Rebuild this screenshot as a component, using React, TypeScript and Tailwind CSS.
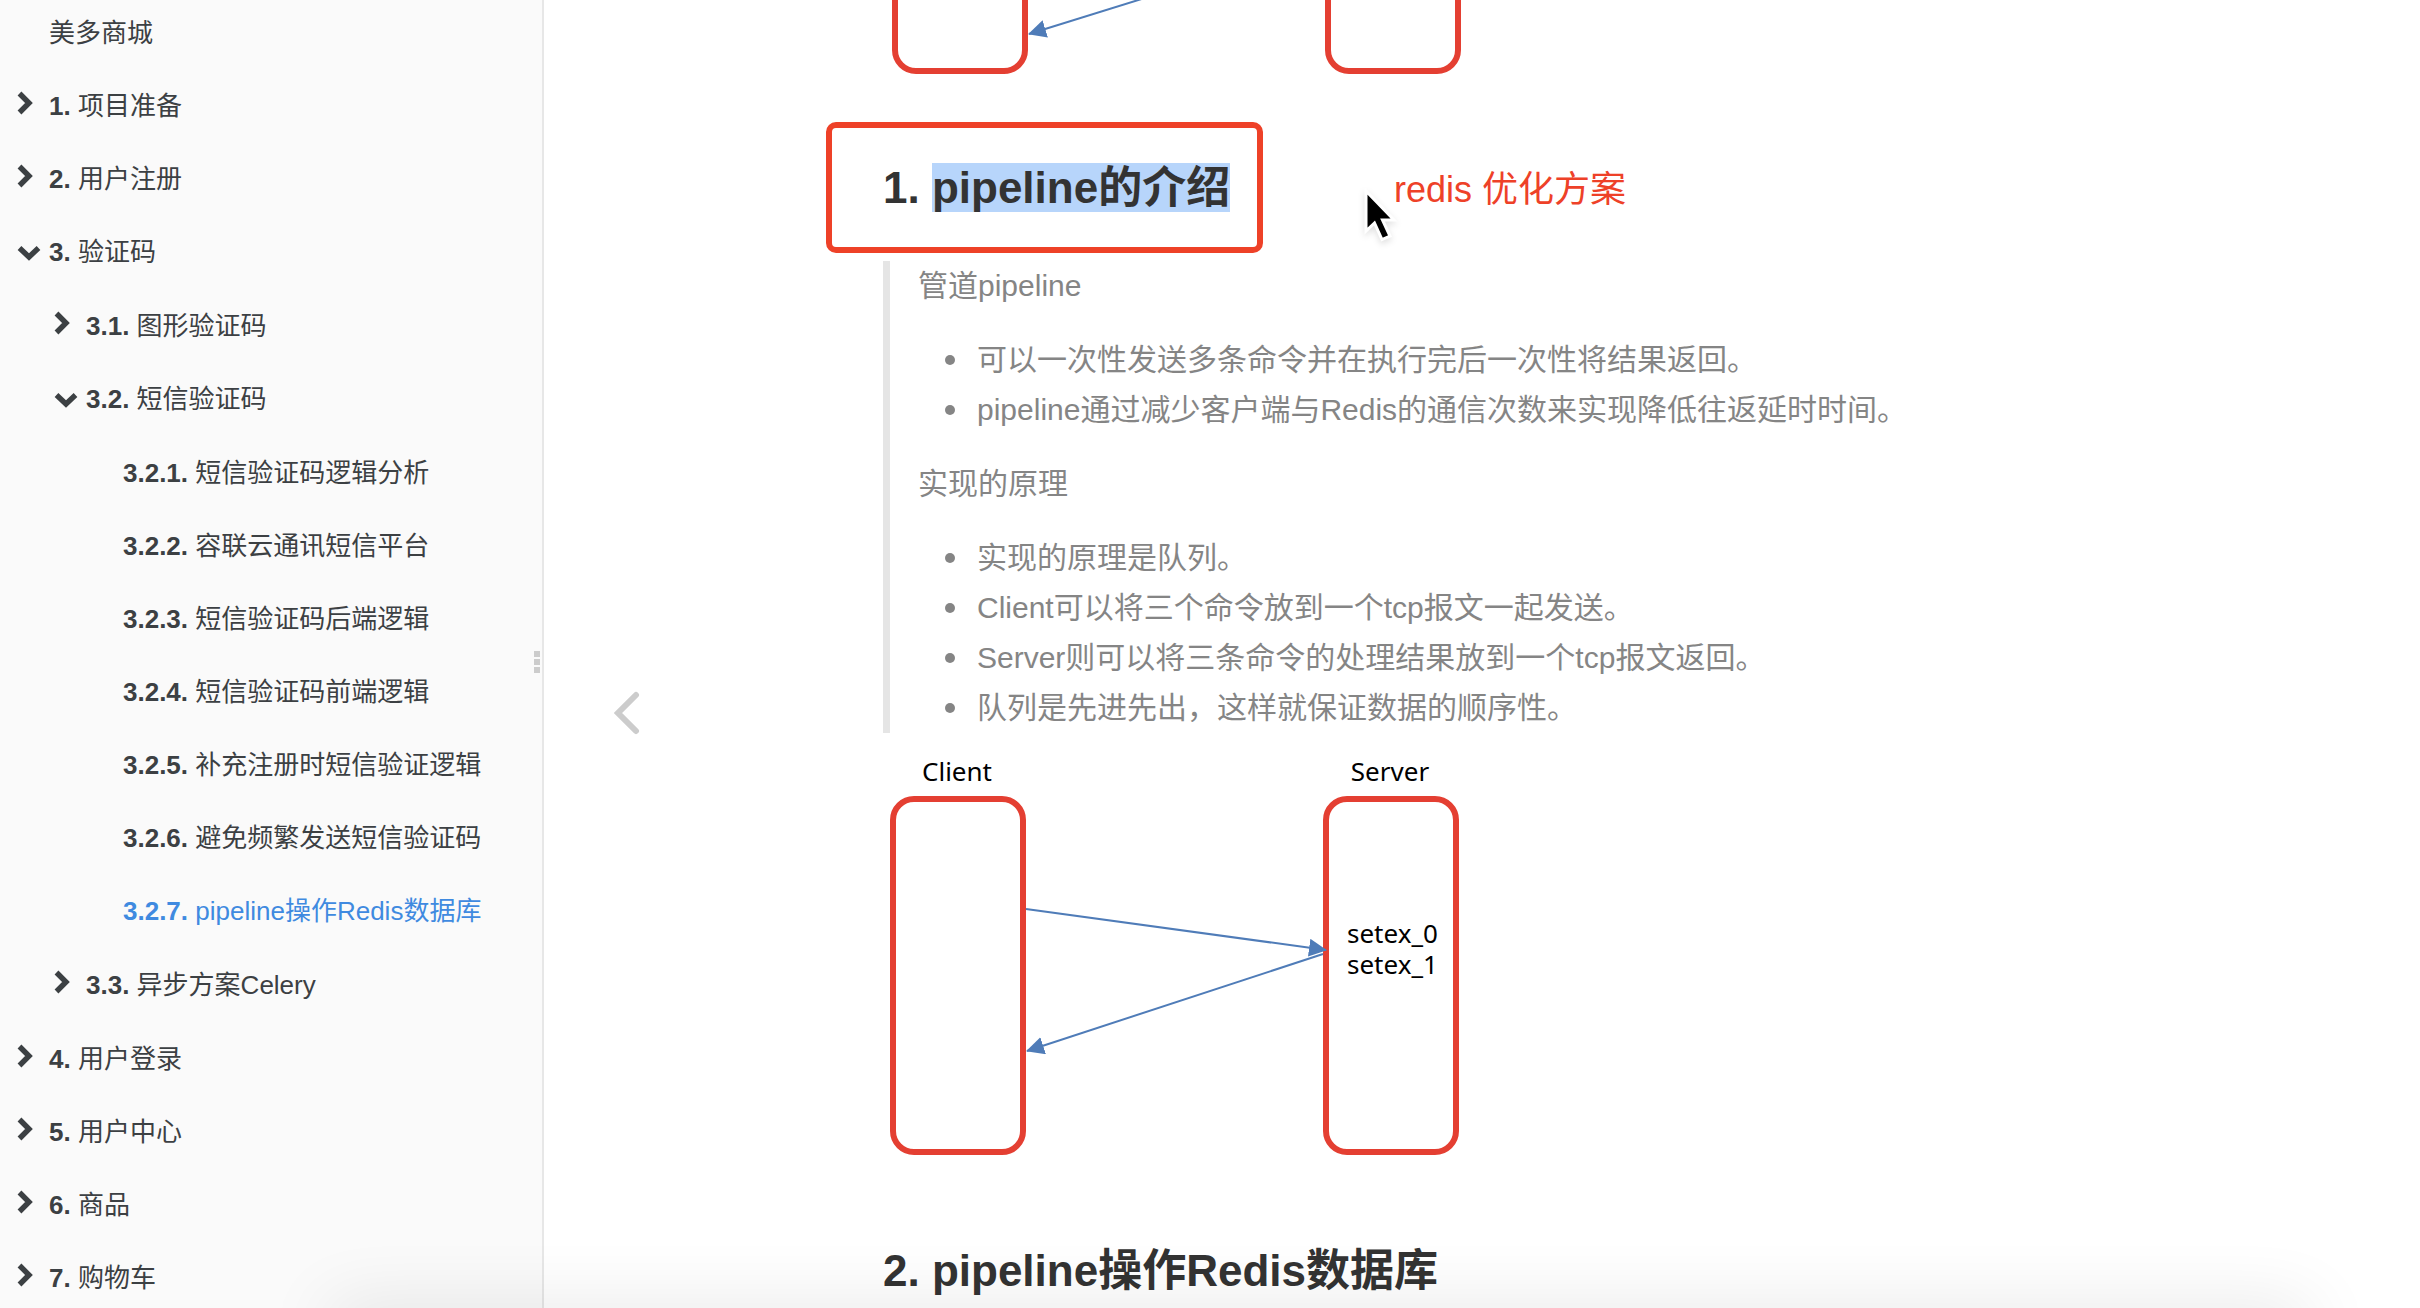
import { useState } from "react";

type Entry = {
  num?: string;
  title: string;
  active?: boolean;
  children?: Entry[];
  collapsed?: boolean;
};

const summary: Entry[] = [
  { title: "美多商城" },
  { num: "1.", title: "项目准备", collapsed: true },
  { num: "2.", title: "用户注册", collapsed: true },
  {
    num: "3.",
    title: "验证码",
    children: [
      { num: "3.1.", title: "图形验证码", collapsed: true },
      {
        num: "3.2.",
        title: "短信验证码",
        children: [
          { num: "3.2.1.", title: "短信验证码逻辑分析" },
          { num: "3.2.2.", title: "容联云通讯短信平台" },
          { num: "3.2.3.", title: "短信验证码后端逻辑" },
          { num: "3.2.4.", title: "短信验证码前端逻辑" },
          { num: "3.2.5.", title: "补充注册时短信验证逻辑" },
          { num: "3.2.6.", title: "避免频繁发送短信验证码" },
          { num: "3.2.7.", title: "pipeline操作Redis数据库", active: true },
        ],
      },
      { num: "3.3.", title: "异步方案Celery", collapsed: true },
    ],
  },
  { num: "4.", title: "用户登录", collapsed: true },
  { num: "5.", title: "用户中心", collapsed: true },
  { num: "6.", title: "商品", collapsed: true },
  { num: "7.", title: "购物车", collapsed: true },
];

const features = [
  "可以一次性发送多条命令并在执行完后一次性将结果返回。",
  "pipeline通过减少客户端与Redis的通信次数来实现降低往返延时时间。",
];

const principles = [
  "实现的原理是队列。",
  "Client可以将三个命令放到一个tcp报文一起发送。",
  "Server则可以将三条命令的处理结果放到一个tcp报文返回。",
  "队列是先进先出，这样就保证数据的顺序性。",
];

function ChevronRight() {
  return (
    <svg width="16" height="24" viewBox="0 0 16 24" className="mb-2" aria-hidden="true">
      <path d="M2.5 2.5L12 12L2.5 21.5" fill="none" stroke="currentColor" strokeWidth="5.4" />
    </svg>
  );
}

function ChevronDown() {
  return (
    <svg width="24" height="16" viewBox="0 0 24 16" aria-hidden="true">
      <path d="M2.5 3L12 12L21.5 3" fill="none" stroke="currentColor" strokeWidth="5.4" />
    </svg>
  );
}

function SummaryItem({ entry }: { entry: Entry }) {
  const [open, setOpen] = useState(Boolean(entry.children));
  const expandable = entry.children || entry.collapsed;
  return (
    <li>
      <div className={entry.active ? "flex h-[73px] items-center text-[#3f8ae0]" : "flex h-[73px] items-center"}>
        <div className="flex w-8 shrink-0 items-center">
          {expandable && (
            <button type="button" aria-label={entry.title} aria-expanded={open} onClick={() => setOpen(!open)}>
              {open ? <ChevronDown /> : <ChevronRight />}
            </button>
          )}
        </div>
        <a href="#" className="whitespace-nowrap">
          {entry.num && <b>{entry.num} </b>}
          {entry.title}
        </a>
      </div>
      {open && entry.children && (
        <ul className="py-px pl-[37px]">
          {entry.children.map((child) => (
            <SummaryItem key={child.title} entry={child} />
          ))}
        </ul>
      )}
    </li>
  );
}

function BulletList({ items }: { items: string[] }) {
  return (
    <ul className="pl-[27px]">
      {items.map((item) => (
        <li
          key={item}
          className="flex items-center before:mr-[22px] before:size-[10px] before:shrink-0 before:rounded-full before:bg-current before:content-['']"
        >
          {item}
        </li>
      ))}
    </ul>
  );
}

type DiagramProps = {
  label: string;
  names?: boolean;
  requestFrom: number;
  serverY: number;
  replyTo: number;
  commands?: string[];
};

function Diagram({ label, names, requestFrom, serverY, replyTo, commands = [] }: DiagramProps) {
  const id = `head-${serverY}`;
  return (
    <svg
      width="584"
      height="410"
      viewBox="0 0 584 410"
      role="img"
      aria-label={label}
      className="block shrink-0 font-['Noto_Sans','Noto_Sans_CJK_SC',sans-serif] text-[26px]"
    >
      <defs>
        <marker id={id} markerUnits="userSpaceOnUse" markerWidth="18" markerHeight="18" refX="17" refY="9" orient="auto">
          <path d="M0 0L18 9L0 18Z" fill="#4f7cb8" />
        </marker>
      </defs>
      {names && (
        <>
          <text x="74" y="32" textAnchor="middle">
            Client
          </text>
          <text x="507" y="32" textAnchor="middle">
            Server
          </text>
        </>
      )}
      <g fill="none" stroke="#e43f32" strokeWidth="6">
        <rect x="10" y="50" width="130" height="353" rx="21" />
        <rect x="443" y="50" width="130" height="353" rx="21" />
      </g>
      <g stroke="#4f7cb8" strokeWidth="2">
        <line x1="143" y1={requestFrom} x2="443" y2={serverY} markerEnd={`url(#${id})`} />
        <line x1="440" y1={serverY + 4} x2="144" y2={replyTo} markerEnd={`url(#${id})`} />
      </g>
      {commands.map((command, i) => (
        <text key={command} x="464" y={194 + i * 31}>
          {command}
        </text>
      ))}
    </svg>
  );
}

function Cursor() {
  return (
    <svg width="36" height="56" viewBox="0 0 36 56" aria-hidden="true" className="drop-shadow-md">
      <path d="M4 3V43L12.5 35L20 51.5L28 48L20.5 32H32Z" fill="#000" stroke="#fff" strokeWidth="3" />
    </svg>
  );
}

export default function App() {
  return (
    <div className="relative flex h-screen overflow-hidden bg-white font-['Liberation_Sans','Noto_Sans_CJK_SC',sans-serif]">
      <aside className="relative w-[544px] shrink-0 overflow-hidden border-r-2 border-[#e7e7e7] bg-[#fafafa] text-[26px] text-[#3c4043]">
        <nav aria-label="目录" className="-mt-[3px] pl-[17px]">
          <ul>
            {summary.map((entry) => (
              <SummaryItem key={entry.title} entry={entry} />
            ))}
          </ul>
        </nav>
        <div className="absolute inset-y-0 right-0.5 flex flex-col items-center justify-center gap-0.5 pt-4">
          <span className="size-[6px] bg-[#cccccc]" />
          <span className="size-[6px] bg-[#cccccc]" />
          <span className="size-[6px] bg-[#cccccc]" />
        </div>
      </aside>

      <main className="flex min-w-0 flex-1">
        <div className="flex w-[166px] shrink-0 items-center justify-center pt-[118px]">
          <a href="#" aria-label="上一页" className="text-[#cccccc]">
            <svg width="26" height="44" viewBox="0 0 26 44" aria-hidden="true">
              <path
                d="M22 4L4 22L22 40"
                fill="none"
                stroke="currentColor"
                strokeWidth="6"
                strokeLinecap="round"
              />
            </svg>
          </a>
        </div>

        <article className="mx-auto w-full max-w-[1198px] text-[30px] leading-[50px] text-[#858585]">
          <div className="flex h-[78px] items-end overflow-hidden pl-0.5">
            <Diagram label="Client, Server" requestFrom={230} serverY={270} replyTo={366} />
          </div>

          <h2 className="relative mt-20 text-[44px] leading-[60px] font-bold text-[#333333]">
            1. <mark className="bg-[#b7d5fb] text-inherit">pipeline的介绍</mark>
            <span className="absolute -top-9 -left-[57px] h-[131px] w-[437px] rounded-[10px] border-6 border-[#ee4128]" />
            <span className="absolute top-1 left-[511px] text-[36px] leading-[56px] font-normal whitespace-nowrap text-[#ee4128]">
              redis 优化方案
            </span>
            <span className="absolute top-[30px] left-[479px]">
              <Cursor />
            </span>
          </h2>

          <blockquote className="mt-[43px] flex flex-col gap-6 border-l-[7px] border-[#e5e5e5] pl-7">
            <p>管道pipeline</p>
            <BulletList items={features} />
            <p>实现的原理</p>
            <BulletList items={principles} />
          </blockquote>

          <div className="mt-4 text-black">
            <Diagram
              label="Client, Server: setex_0, setex_1"
              names
              requestFrom={160}
              serverY={201}
              replyTo={302}
              commands={["setex_0", "setex_1"]}
            />
          </div>

          <h2 className="mt-[82px] text-[44px] leading-[60px] font-bold text-[#333333]">2. pipeline操作Redis数据库</h2>
        </article>
        <div className="w-[166px] shrink-0" />
      </main>

      <div className="pointer-events-none absolute top-full right-[110px] left-[330px] h-10 shadow-[0_0_70px_rgba(0,0,0,0.12)]" />
    </div>
  );
}
